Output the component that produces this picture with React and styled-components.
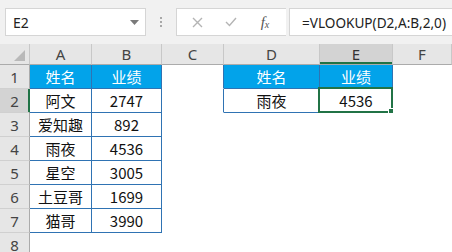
import React from "react";
import styled, { createGlobalStyle } from "styled-components";

const GlobalStyle = createGlobalStyle`
  html, body {
    margin: 0;
    padding: 0;
    background: #fff;
  }
  body {
    font-family: "Noto Sans CJK SC", "Noto Sans", sans-serif;
  }
`;

const BLUE_FILL = "#02a3ea";
const BLUE_LINE = "#2f73b3";
const GREEN = "#217346";

const columns = [
  { key: "A", selected: false },
  { key: "B", selected: false },
  { key: "C", selected: false },
  { key: "D", selected: false },
  { key: "E", selected: true },
  { key: "F", selected: false },
];

// each row: six cells A..F, {text, head, boxed, edge, active}
const rows = [
  [
    { text: "姓名", head: true, boxed: true },
    { text: "业绩", head: true, boxed: true },
    { edge: true },
    { text: "姓名", head: true, boxed: true },
    { text: "业绩", head: true, boxed: true },
    {},
  ],
  [
    { text: "阿文", boxed: true },
    { text: "2747", boxed: true },
    { edge: true },
    { text: "雨夜", boxed: true },
    { text: "4536", boxed: true, active: true },
    {},
  ],
  ...[
    ["爱知趣", "892"],
    ["雨夜", "4536"],
    ["星空", "3005"],
    ["土豆哥", "1699"],
    ["猫哥", "3990"],
  ].map(([name, score]) => [
    { text: name, boxed: true },
    { text: score, boxed: true },
    {},
    {},
    {},
    {},
  ]),
  [{}, {}, {}, {}, {}, {}],
];

export default function App() {
  return (
    <>
      <GlobalStyle />
      <Page>
        <FormulaBar>
          <NameBox>
            <NameText>E2</NameText>
            <svg width="9" height="5" viewBox="0 0 9 5">
              <path d="M0 0 H9 L4.5 5 Z" fill="#7a7a7a" />
            </svg>
          </NameBox>
          <Grip>
            <Dot />
            <Dot />
            <Dot />
          </Grip>
          <ButtonBox>
            <IconSlot>
              <svg width="11" height="11" viewBox="0 0 11 11">
                <path
                  d="M1 1 L10 10 M10 1 L1 10"
                  stroke="#b4b4b4"
                  strokeWidth="1.4"
                  fill="none"
                />
              </svg>
            </IconSlot>
            <IconSlot>
              <svg width="12" height="10" viewBox="0 0 12 10">
                <path
                  d="M1 5 L4.5 8.5 L11 1"
                  stroke="#b4b4b4"
                  strokeWidth="1.4"
                  fill="none"
                />
              </svg>
            </IconSlot>
            <IconSlot>
              <Fx>
                f<sub>x</sub>
              </Fx>
            </IconSlot>
          </ButtonBox>
          <FormulaInput>=VLOOKUP(D2,A:B,2,0)</FormulaInput>
        </FormulaBar>

        <Sheet>
          <Corner>
            <svg width="11" height="11" viewBox="0 0 11 11">
              <path d="M11 0 V11 H0 Z" fill="#b9b9b9" />
            </svg>
          </Corner>
          {columns.map((c) => (
            <ColHeader key={c.key} $selected={c.selected}>
              {c.key}
            </ColHeader>
          ))}
          {rows.map((row, i) => (
            <React.Fragment key={i}>
              <RowHeader $selected={i === 1}>{i + 1}</RowHeader>
              {row.map((cell, j) => (
                <Cell
                  key={j}
                  $head={cell.head}
                  $boxed={cell.boxed}
                  $edge={cell.edge}
                >
                  {cell.text}
                  {cell.active && (
                    <Selection>
                      <FillHandle />
                    </Selection>
                  )}
                </Cell>
              ))}
            </React.Fragment>
          ))}
        </Sheet>
      </Page>
    </>
  );
}

const Page = styled.div`
  width: 452px;
  height: 252px;
  overflow: hidden;
  background: #fff;
`;

const FormulaBar = styled.div`
  display: flex;
  align-items: flex-start;
  height: 44px;
  box-sizing: border-box;
  padding: 8px 0 0 5px;
  background: #f1f1f1;
`;

const NameBox = styled.div`
  display: flex;
  align-items: center;
  justify-content: space-between;
  box-sizing: border-box;
  width: 141px;
  height: 28px;
  padding: 0 6px 0 7px;
  background: #fff;
  border: 1px solid #d5d5d5;
`;

const NameText = styled.span`
  font-family: "Noto Sans", sans-serif;
  font-size: 14px;
  color: #222;
`;

const Grip = styled.div`
  display: flex;
  flex-direction: column;
  align-items: center;
  justify-content: center;
  gap: 2px;
  width: 30px;
  height: 28px;
`;

const Dot = styled.span`
  width: 2px;
  height: 2px;
  background: #a8a8a8;
`;

const ButtonBox = styled.div`
  display: flex;
  align-items: center;
  box-sizing: border-box;
  width: 110px;
  height: 28px;
  padding-left: 3px;
  background: #fff;
  border: 1px solid #d5d5d5;
  border-right: none;
`;

const IconSlot = styled.div`
  display: flex;
  align-items: center;
  justify-content: center;
  width: 34px;
  height: 100%;
`;

const Fx = styled.span`
  font-family: "Liberation Serif", serif;
  font-style: italic;
  font-size: 15px;
  color: #555;
  line-height: 1;

  sub {
    font-size: 10px;
    vertical-align: -1px;
  }
`;

const FormulaInput = styled.div`
  flex: 1;
  display: flex;
  align-items: center;
  box-sizing: border-box;
  height: 28px;
  margin-left: 3px;
  padding-left: 12px;
  background: #fff;
  border: 1px solid #d5d5d5;
  border-right: none;
  font-family: "Noto Sans", sans-serif;
  font-size: 13.6px;
  color: #222;
  white-space: nowrap;
`;

const Sheet = styled.div`
  display: grid;
  grid-template-columns: 30px 62px 70px 62px 96px 73px 1fr;
  grid-template-rows: 21px repeat(8, 24px);
`;

const Corner = styled.div`
  display: flex;
  align-items: flex-end;
  justify-content: flex-end;
  box-sizing: border-box;
  padding: 0 4px 3px 0;
  background: #e6e6e6;
  border-right: 1px solid #c8c8c8;
  border-bottom: 1px solid #ababab;
`;

const ColHeader = styled.div`
  display: flex;
  align-items: center;
  justify-content: center;
  box-sizing: border-box;
  background: ${(p) => (p.$selected ? "#d3d3d3" : "#e6e6e6")};
  border-right: 1px solid #c8c8c8;
  border-bottom: 1px solid #ababab;
  ${(p) => p.$selected && `box-shadow: inset 0 -2px 0 ${GREEN};`}
  font-family: "Noto Sans", sans-serif;
  font-size: 15px;
  color: ${(p) => (p.$selected ? "#333" : "#444")};
`;

const RowHeader = styled.div`
  display: flex;
  align-items: center;
  justify-content: center;
  box-sizing: border-box;
  background: ${(p) => (p.$selected ? "#d3d3d3" : "#e6e6e6")};
  border-right: 1px solid ${(p) => (p.$selected ? GREEN : "#ababab")};
  border-bottom: 1px solid #d0d0d0;
  ${(p) => p.$selected && `box-shadow: inset -1px 0 0 ${GREEN};`}
  font-family: "Noto Sans", sans-serif;
  font-size: 15px;
  color: #444;
`;

const Cell = styled.div`
  position: relative;
  display: flex;
  align-items: center;
  justify-content: center;
  box-sizing: border-box;
  background: ${(p) => (p.$head ? BLUE_FILL : "#fff")};
  color: ${(p) => (p.$head ? "#fff" : "#111")};
  border-right: 1px solid
    ${(p) => (p.$boxed || p.$edge ? BLUE_LINE : "transparent")};
  border-bottom: 1px solid ${(p) => (p.$boxed ? BLUE_LINE : "transparent")};
  font-family: "Noto Sans CJK SC", sans-serif;
  font-size: 15px;
  white-space: nowrap;
`;

const Selection = styled.div`
  position: absolute;
  top: -2px;
  left: -2px;
  right: -1px;
  bottom: -1px;
  border: 2px solid ${GREEN};
  pointer-events: none;
`;

const FillHandle = styled.div`
  position: absolute;
  right: -4px;
  bottom: -4px;
  width: 5px;
  height: 5px;
  background: ${GREEN};
  border: 1px solid #fff;
`;
